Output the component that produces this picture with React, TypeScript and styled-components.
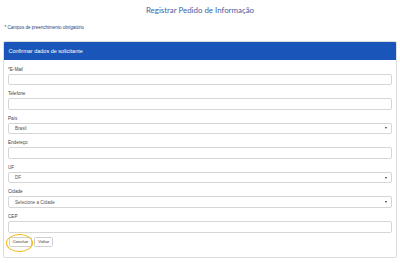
import styled, { createGlobalStyle } from "styled-components";

const GlobalStyle = createGlobalStyle`
  html, body {
    margin: 0;
    padding: 0;
    background: #ffffff;
  }
  body {
    font-family: "Liberation Sans", Arial, sans-serif;
    color: #333;
  }
`;

const Page = styled.div`
  width: 400px;
  padding: 4px 3px 0 3px;
  box-sizing: border-box;
`;

const Title = styled.h1`
  margin: 0;
  text-align: center;
  font-family: Lato, "Open Sans", sans-serif;
  font-weight: 400;
  font-size: 7.9px;
  line-height: 12px;
  color: #3d5fa5;
`;

const Required = styled.p`
  margin: 9px 0 0 1.5px;
  font-size: 4.5px;
  line-height: 6px;
  color: #1f3f7a;
`;

const Panel = styled.section`
  margin-top: 10px;
  border: 1px solid #dcdcdc;
  border-radius: 2px;
  background: #fff;
`;

const PanelHeader = styled.div`
  height: 18px;
  background: #1a56b9;
  color: #fff;
  font-size: 5.5px;
  display: flex;
  align-items: center;
  padding: 0 4.5px;
  border-radius: 1px 1px 0 0;
`;

const PanelBody = styled.div`
  padding: 4.5px 4px 10px 4px;
`;

const Field = styled.div`
  display: flex;
  flex-direction: column;
  margin-bottom: 4px;
`;

const Label = styled.label`
  font-size: 4.6px;
  line-height: 9px;
  color: #444;
`;

const Input = styled.div`
  height: 11.6px;
  box-sizing: border-box;
  border: 1px solid #d6d6d6;
  border-radius: 2px;
  background: #fff;
`;

const Select = styled(Input)`
  display: flex;
  align-items: center;
  justify-content: space-between;
  padding: 0 4px 0 6px;
  font-size: 4.6px;
  color: #555;
`;

const Arrow = styled.span`
  width: 0;
  height: 0;
  border-left: 1.6px solid transparent;
  border-right: 1.6px solid transparent;
  border-top: 2.4px solid #333;
`;

const Actions = styled.div`
  display: flex;
  gap: 2px;
  margin-top: 2.5px;
  padding-left: 0.5px;
  position: relative;
`;

const Button = styled.button`
  height: 10px;
  padding: 0 3px;
  box-sizing: border-box;
  border: 1px solid #cfcfcf;
  border-radius: 1.5px;
  background: #fff;
  font-family: "Liberation Sans", Arial, sans-serif;
  font-size: 4.3px;
  color: #333;
  line-height: 1;
`;

const Highlight = styled.span`
  position: absolute;
  left: -2.5px;
  top: -2.6px;
  width: 27px;
  height: 18px;
  border: 1.6px solid #f4b400;
  border-radius: 50%;
  box-sizing: border-box;
  pointer-events: none;
`;

const fields: { label: string; value?: string; select?: boolean }[] = [
  { label: "*E-Mail" },
  { label: "Telefone" },
  { label: "País", value: "Brasil", select: true },
  { label: "Endereço" },
  { label: "UF", value: "DF", select: true },
  { label: "Cidade", value: "Selecione a Cidade", select: true },
  { label: "CEP" },
];

export default function App() {
  return (
    <>
      <GlobalStyle />
      <Page>
        <Title>Registrar Pedido de Informação</Title>
        <Required>* Campos de preenchimento obrigatório</Required>
        <Panel>
          <PanelHeader>Confirmar dados de solicitante</PanelHeader>
          <PanelBody>
            {fields.map((f) => (
              <Field key={f.label}>
                <Label>{f.label}</Label>
                {f.select ? (
                  <Select>
                    <span>{f.value}</span>
                    <Arrow />
                  </Select>
                ) : (
                  <Input />
                )}
              </Field>
            ))}
            <Actions>
              <Highlight />
              <Button>Concluir</Button>
              <Button>Voltar</Button>
            </Actions>
          </PanelBody>
        </Panel>
      </Page>
    </>
  );
}
